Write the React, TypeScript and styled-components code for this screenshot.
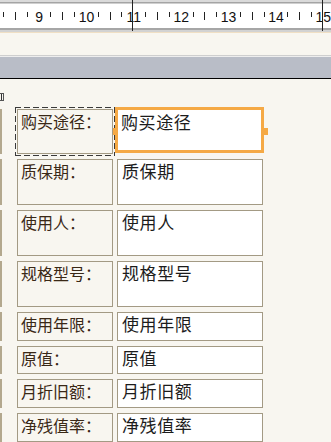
import { styled, createGlobalStyle } from "styled-components";

const tan = "#a39a84";
const cream = "#f8f6f0";

const Global = createGlobalStyle`
  html, body {
    margin: 0;
    padding: 0;
    background: ${cream};
    overflow: hidden;
  }
`;

const Page = styled.div`
  width: 331px;
  height: 442px;
  overflow: hidden;
  background: ${cream};
  display: flex;
  flex-direction: column;
`;

const Ruler = styled.div`
  position: relative;
  display: flex;
  flex-direction: column;
  flex-shrink: 0;
`;

const RulerEdge = styled.div<{ $bottom?: boolean }>`
  height: 4px;
  background: ${(p) =>
    p.$bottom
      ? "linear-gradient(#a6a6a6 0 2px, #d2d2d2 2px 4px)"
      : "linear-gradient(#dadada 0 2px, #a4a4a4 2px 3px, #cfcfcf 3px 4px)"};
`;

const Scale = styled.div`
  height: 24px;
  background: #fff;
  display: flex;
  overflow: hidden;
`;

const Unit = styled.div`
  flex: 0 0 47.4px;
  display: grid;
  grid-template-columns: repeat(4, 1fr);
  &:first-child {
    margin-left: -14.3px;
  }
`;

const Slot = styled.div`
  display: flex;
  justify-content: center;
  align-items: flex-start;
  width: 0;
  justify-self: center;
`;

const Num = styled.span`
  margin-top: 7px;
  font-family: "Liberation Sans", Arial, sans-serif;
  font-size: 14px;
  line-height: 13px;
  color: #111;
`;

const Tick = styled.span<{ $half?: boolean }>`
  margin-top: 8px;
  width: 1px;
  height: ${(p) => (p.$half ? 8 : 5)}px;
  background: #222;
  flex-shrink: 0;
`;

const Marker = styled.div<{ $x: number }>`
  position: absolute;
  top: 0;
  left: ${(p) => p.$x}px;
  width: 1px;
  height: 31px;
  background: #222;
`;

const Gap = styled.div`
  height: 22px;
  border-top: 1px solid #f0dfc4;
  flex-shrink: 0;
`;

const SectionBar = styled.div`
  height: 22px;
  flex-shrink: 0;
  border-top: 1px solid #cfcfcf;
  box-shadow: inset 0 1px 0 #eeeeee;
  background: #b9bdc7;
  border-bottom: 1px solid #000;
`;

const Body = styled.div`
  padding-top: 14px;
  display: flex;
  flex-direction: column;
`;

const Corner = styled.div`
  width: 3px;
  height: 6px;
  border: 1px solid #555;
  border-left: none;
  background: linear-gradient(90deg, transparent 1px, #333 1px 2px, transparent 2px);
`;

const Rows = styled.div`
  margin-top: 8px;
  display: flex;
  flex-direction: column;
  gap: 5px;
`;

const Row = styled.div<{ $h: number }>`
  height: ${(p) => p.$h}px;
  display: flex;
  align-items: stretch;
`;

const Stub = styled.div`
  width: 2px;
  background: #b3a88e;
  flex-shrink: 0;
`;

const Label = styled.div<{ $picked?: boolean }>`
  position: relative;
  margin-left: 15px;
  width: 96px;
  box-sizing: border-box;
  border: 1px solid ${tan};
  padding: 1px 3px;
  font-family: "Noto Sans CJK SC", "Noto Sans", sans-serif;
  font-size: 16px;
  line-height: 20px;
  color: #3a2816;
  white-space: nowrap;
  &::before {
    content: "";
    display: ${(p) => (p.$picked ? "block" : "none")};
    position: absolute;
    inset: -3px;
    background:
      linear-gradient(90deg, #3a3a3a 6px, transparent 6px) top left / 9px 1px repeat-x,
      linear-gradient(90deg, #3a3a3a 6px, transparent 6px) bottom left / 9px 1px repeat-x,
      linear-gradient(#3a3a3a 6px, transparent 6px) top left / 1px 9px repeat-y,
      linear-gradient(#3a3a3a 6px, transparent 6px) top right / 1px 9px repeat-y;
  }
`;

const Field = styled.div<{ $active?: boolean }>`
  position: relative;
  box-sizing: border-box;
  margin-left: ${(p) => (p.$active ? 2 : 4)}px;
  margin-top: ${(p) => (p.$active ? -2 : 0)}px;
  width: ${(p) => (p.$active ? 149 : 146)}px;
  height: ${(p) => (p.$active ? "46px" : "auto")};
  background: #fff;
  border: ${(p) => (p.$active ? "3px solid #f5a945" : `1px solid ${tan}`)};
  padding: ${(p) => (p.$active ? "2px 3px 0" : "1px 4px")};
  font-family: "Noto Sans CJK SC", "Noto Sans", sans-serif;
  font-size: 17px;
  letter-spacing: 0.6px;
  line-height: 20px;
  color: #1c1c1c;
  white-space: nowrap;
  &::before,
  &::after {
    content: "";
    display: ${(p) => (p.$active ? "block" : "none")};
    position: absolute;
    top: 18px;
    height: 7px;
    background: #f5a945;
  }
  &::before {
    left: -5px;
    width: 5px;
  }
  &::after {
    right: -7px;
    width: 6px;
  }
`;

const fields = [
  { name: "购买途径", h: 45 },
  { name: "质保期", h: 46 },
  { name: "使用人", h: 46 },
  { name: "规格型号", h: 46 },
  { name: "使用年限", h: 29 },
  { name: "原值", h: 28 },
  { name: "月折旧额", h: 29 },
  { name: "净残值率", h: 29 },
];

const units = [8, 9, 10, 11, 12, 13, 14, 15];

export default function App() {
  return (
    <Page>
      <Global />
      <Ruler>
        <RulerEdge />
        <Scale>
          {units.map((n) => (
            <Unit key={n}>
              <Slot>{n > 8 && <Num>{n}</Num>}</Slot>
              <Slot>
                <Tick />
              </Slot>
              <Slot>
                <Tick $half />
              </Slot>
              <Slot>
                <Tick />
              </Slot>
            </Unit>
          ))}
        </Scale>
        <RulerEdge $bottom />
        <Marker $x={132} />
        <Marker $x={322} />
      </Ruler>
      <Gap />
      <SectionBar />
      <Body>
        <Corner />
        <Rows>
          {fields.map((f, i) => (
            <Row key={f.name} $h={f.h}>
              <Stub />
              <Label $picked={i === 0}>{f.name}：</Label>
              <Field $active={i === 0}>{f.name}</Field>
            </Row>
          ))}
        </Rows>
      </Body>
    </Page>
  );
}
